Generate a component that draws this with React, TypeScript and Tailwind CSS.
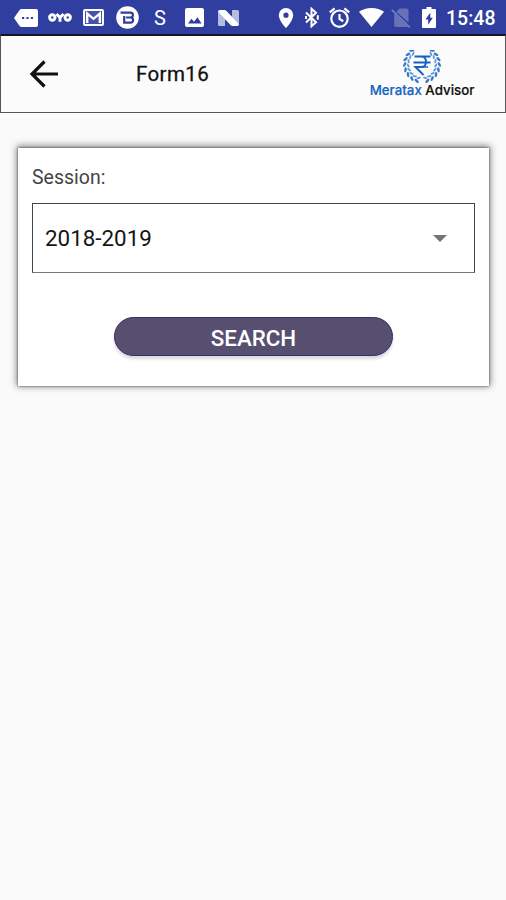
import React from 'react';

const StatusBar: React.FC = () => (
  <div className="flex h-[34px] items-center bg-[#303f9f] pl-[14px] pr-[11px] pt-px text-white">
    <div className="flex flex-1 items-center">
      <svg className="h-[18px] w-6 shrink-0" viewBox="0 0 24 18" fill="currentColor">
        <path fillRule="evenodd" d="M7.5 0H22a2 2 0 0 1 2 2v14a2 2 0 0 1-2 2H7.500Q6.300 18 5.600 17L0 9l5.600-8Q6.300 0 7.500 0ZM8 7.900v2.200h2.200V7.900ZM12.400 7.900v2.200h2.200V7.900ZM16.800 7.900v2.200H19V7.900Z" />
      </svg>
      <svg className="ml-[10px] h-[11px] w-6 shrink-0" viewBox="0 0 24 11" fill="none" stroke="currentColor" strokeWidth="3">
        <circle cx="4.300" cy="5.500" r="2.700" />
        <path d="M8.500 2 12 5.500 15.500 2M12 5v4.800" />
        <circle cx="19.700" cy="5.500" r="2.700" />
      </svg>
      <svg className="ml-[11px] h-[17px] w-[21px] shrink-0" viewBox="0 0 21 17">
        <rect x="1" y="1" width="19" height="15" rx="1" fill="#4553a8" stroke="currentColor" strokeWidth="2" />
        <path d="M4.200 14V4.500l6.300 5.300 6.300-5.300V14" fill="none" stroke="currentColor" strokeWidth="2.400" />
      </svg>
      <svg className="ml-3 h-[23px] w-[23px] shrink-0" viewBox="0 0 23 23">
        <circle cx="11.500" cy="11.500" r="11.300" fill="currentColor" />
        <path d="M4.500 6.700h10a2.400 2.400 0 0 1 0 4.800H10M14.500 11.500a2.600 2.600 0 0 1 0 5.200H8.200V10" fill="none" stroke="#303f9f" strokeWidth="2.200" />
      </svg>
      <span className="ml-[15px] w-3 text-center text-[20px] leading-none">S</span>
      <svg className="ml-[19px] h-[19px] w-[19px] shrink-0" viewBox="0 0 19 19">
        <rect width="19" height="19" rx="2" fill="currentColor" />
        <path d="m3 15.500 3.500-4.700 2.500 3 3.500-4.500 4 6.200Z" fill="#303f9f" />
      </svg>
      <svg className="ml-[14px] h-4 w-[21px] shrink-0" viewBox="0 0 21 16" fill="currentColor">
        <path d="M0 2 7 9v6.500q0 .5-.5.5H1.500Q0 16 0 14.500ZM14 .5q0-.5.500-.5h5Q21 0 21 1.500V14l-7-7Z" opacity=".65" />
        <path d="M1.500 0H6.500q1 0 1.700.8L21 14q0 2-1.500 2h-5q-1 0-1.700-.8L0 2q0-2 1.500-2Z" />
      </svg>
    </div>
    <svg className="h-5 w-4 shrink-0" viewBox="0 0 16 20" fill="currentColor">
      <path fillRule="evenodd" d="M8 0a7.200 7.200 0 0 0-7.200 7.200C.8 12.500 8 20 8 20s7.200-7.500 7.200-12.800A7.200 7.200 0 0 0 8 0Zm0 4.600a2.600 2.600 0 1 1 0 5.200 2.600 2.600 0 0 1 0-5.200Z" />
    </svg>
    <svg className="ml-[11px] h-[21px] w-[14px] shrink-0" viewBox="0 0 14 21" fill="none" stroke="currentColor" strokeWidth="2">
      <path d="m1 5.500 10 9.800-4.500 4V1.700l4.500 4L1 15.500" />
      <path d="M12.800 8.300v4.400M1 9v3" />
    </svg>
    <svg className="ml-[10px] h-[21px] w-[21px] shrink-0" viewBox="0 0 21 21" fill="none" stroke="currentColor" strokeWidth="2.200">
      <circle cx="10.500" cy="11.700" r="8.200" />
      <path d="M10.500 7v5l3.700 2.300M.8 5.300l4.800-4M20.200 5.300l-4.800-4" />
    </svg>
    <svg className="ml-[9px] h-[19px] w-[25px] shrink-0" viewBox="0 0 25 19" fill="currentColor">
      <path d="M12.500 19 0 3.800C3.500 1.300 7.600 0 12.500 0S21.500 1.300 25 3.800Z" />
    </svg>
    <svg className="ml-[7px] h-5 w-5 shrink-0 text-[#7680bd]" viewBox="0 0 20 20" fill="currentColor">
      <path d="M8.500.5H16a1.500 1.500 0 0 1 1.500 1.500v12.500L5.300 3.700ZM3.200 5.500 17 19H4.700a1.500 1.500 0 0 1-1.500-1.500Z" opacity=".8" />
      <path d="m.8 1.800 18 17.500" stroke="currentColor" strokeWidth="1.700" />
    </svg>
    <svg className="ml-[11px] h-[21px] w-[14px] shrink-0" viewBox="0 0 14 21" fill="currentColor">
      <path fillRule="evenodd" d="M4.500 0h5v2H13a1 1 0 0 1 1 1v17a1 1 0 0 1-1 1H1a1 1 0 0 1-1-1V3a1 1 0 0 1 1-1h3.500ZM8.300 5.500 3.500 12.500h2.700v5.200l4.600-7H8.300Z" />
    </svg>
    <span className="ml-[10px] w-[49px] pt-0.5 text-[19.500px] font-medium leading-none whitespace-nowrap">15:48</span>
  </div>
);

const LEAVES = [36, 54, 72, 90, 108, 126, 144, 162];

const Branch: React.FC = () => (
  <>
    {LEAVES.map((angle) => (
      <g key={angle} transform={`rotate(${angle})`}>
        <ellipse cx="0" cy="-17.300" rx="2.600" ry="1.300" transform="rotate(-28 0 -17.300)" fill="#3979c8" />
        <ellipse cx="1" cy="-13.800" rx="2.300" ry="1" transform="rotate(28 1 -13.800)" fill="#5f97d8" />
      </g>
    ))}
  </>
);

const Logo: React.FC = () => (
  <div className="flex w-[106px] flex-col items-center">
    <svg className="h-[33px] w-10" viewBox="0 0 40 33">
      <g transform="translate(20 14.500)">
        <Branch />
        <g transform="scale(-1 1)">
          <Branch />
        </g>
      </g>
      <g fill="none" stroke="#1560bd" strokeWidth="2">
        <path d="M12.500 6.500h16M11.500 12.500h17M14 6.500h5.500c6 0 6 10.500 0 10.500h-6l8 8" />
        <path d="M17 17h9" strokeWidth="1.500" />
      </g>
    </svg>
    <div className="-mt-px font-['Inter',sans-serif] text-[13.300px] font-medium leading-[16px] whitespace-nowrap text-[#111] [-webkit-text-stroke:0.200px]">
      <span className="text-[#1765bd]">Meratax</span> Advisor
    </div>
  </div>
);

const Header: React.FC = () => (
  <header className="flex h-[79px] items-center border border-t-2 border-[#555] border-t-[#151525] bg-[#fbfbfb] pr-[30px] pl-[28px]">
    <svg className="h-[30px] w-[30px] shrink-0" viewBox="0 0 30 30" fill="none" stroke="#111" strokeWidth="3.200">
      <path d="M29 15H3.500M15.500 2.500 3 15l12.500 12.500" />
    </svg>
    <h1 className="ml-[77px] flex-1 text-[20.500px] font-normal leading-6 tracking-[0.400px] text-[#111] [-webkit-text-stroke:0.300px]">Form16</h1>
    <Logo />
  </header>
);

export default function App() {
  return (
    <div className="min-h-[900px] w-[506px] bg-[#fafafa] font-['Roboto',sans-serif]">
      <StatusBar />
      <Header />
      <main className="pt-[35px] pr-[17px] pl-[18px]">
        <section className="h-[238px] bg-white px-[14px] pt-[17px] shadow-[0_0_2px_rgba(0,0,0,0.6),0_-1px_7px_1px_rgba(0,0,0,0.5)]">
          <label className="block pt-px text-[19.500px] leading-6 text-[#444]">Session:</label>
          <div className="mt-[13px] flex h-[70px] w-[443px] items-center justify-between border border-[#444] border-b-[#777] pr-[27px] pl-3">
            <span className="pt-0.5 text-[22.400px] text-[#151515]">2018-2019</span>
            <svg className="h-[7px] w-[14px]" viewBox="0 0 14 7" fill="#757575">
              <path d="M0 0h14L7 7Z" />
            </svg>
          </div>
          <button className="mx-auto mt-11 flex h-[39px] w-[279px] items-center justify-center rounded-full border border-[#3a2b66] bg-[#564f70] pt-1 text-[22.300px] font-medium text-white shadow-[0_3px_3px_rgba(0,0,0,0.15)]">
            SEARCH
          </button>
        </section>
      </main>
    </div>
  );
}
